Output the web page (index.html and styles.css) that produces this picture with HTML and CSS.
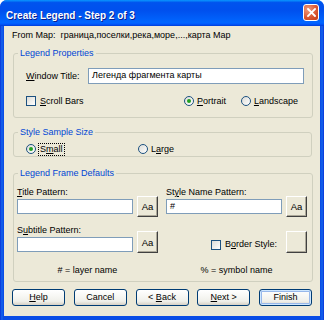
FILE: index.html
```html
<!DOCTYPE html>
<html lang="en">
<head>
    <meta charset="UTF-8">
    <title>Create Legend - Step 2 of 3</title>
    <link rel="stylesheet" href="styles.css">
</head>
<body>
    <div class="window">
        <div class="titlebar">
            <span class="title">Create Legend - Step 2 of 3</span>
            <span class="close">
                <svg width="9" height="9" viewBox="0 0 9 9"><path d="M1 1 L8 8 M8 1 L1 8" stroke="#fff" stroke-width="1.8" stroke-linecap="square"/></svg>
            </span>
        </div>

        <div class="client">
            <div class="from-map">
                <span class="from-label">From Map:</span>
                <span>граница,поселки,река,море,...,карта Map</span>
            </div>

            <fieldset class="group">
                <legend>Legend Properties</legend>
                <div class="group-body props">
                    <div class="row">
                        <span class="field-label"><u>W</u>indow Title:</span>
                        <div class="textbox wide">Легенда фрагмента карты</div>
                    </div>
                    <div class="row options">
                        <span class="opt"><span class="check"></span><span><u>S</u>croll Bars</span></span>
                        <span class="opt portrait"><span class="radio checked"></span><span><u>P</u>ortrait</span></span>
                        <span class="opt"><span class="radio"></span><span><u>L</u>andscape</span></span>
                    </div>
                </div>
            </fieldset>

            <fieldset class="group sample">
                <legend>Style Sample Size</legend>
                <div class="group-body sizes">
                    <span class="opt small"><span class="radio checked"></span><span class="focus">S<u>m</u>all</span></span>
                    <span class="opt"><span class="radio"></span><span>L<u>a</u>rge</span></span>
                </div>
            </fieldset>

            <fieldset class="group frame">
                <legend>Legend Frame Defaults</legend>
                <div class="group-body patterns">
                    <div class="cell first">
                        <div class="field">
                            <span class="field-label"><u>T</u>itle Pattern:</span>
                            <div class="textbox"></div>
                        </div>
                        <span class="btn-classic">Aa</span>
                    </div>
                    <div class="cell first">
                        <div class="field">
                            <span class="field-label">St<u>y</u>le Name Pattern:</span>
                            <div class="textbox">#</div>
                        </div>
                        <span class="btn-classic">Aa</span>
                    </div>
                    <div class="cell second">
                        <div class="field">
                            <span class="field-label">S<u>u</u>btitle Pattern:</span>
                            <div class="textbox"></div>
                        </div>
                        <span class="btn-classic">Aa</span>
                    </div>
                    <div class="cell second">
                        <div class="field border-field">
                            <span class="opt"><span class="check"></span><span>B<u>o</u>rder Style:</span></span>
                        </div>
                        <span class="btn-classic"></span>
                    </div>
                    <div class="hint">#&nbsp;= layer name</div>
                    <div class="hint">%&nbsp;= symbol name</div>
                </div>
            </fieldset>

            <div class="buttons">
                <span class="btn"><span><u>H</u>elp</span></span>
                <span class="btn"><span>Cancel</span></span>
                <span class="btn"><span>&lt;&nbsp;<u>B</u>ack</span></span>
                <span class="btn"><span><u>N</u>ext&nbsp;&gt;</span></span>
                <span class="btn default"><span>Finish</span></span>
            </div>
        </div>
    </div>
</body>
</html>
```

FILE: styles.css
```css
/* Reset */
* {
    margin: 0;
    padding: 0;
    box-sizing: border-box;
}

body {
    background-color: #ffffff;
    font-family: 'Liberation Sans', Arial, sans-serif;
    font-size: 9px;
    line-height: 11px;
    color: #000000;
}

u {
    text-decoration: underline;
    text-underline-offset: 1px;
}

/* Window frame */
.window {
    width: 324px;
    height: 320px;
    display: flex;
    flex-direction: column;
    border-radius: 7px 7px 0 0;
    overflow: hidden;
    background: linear-gradient(90deg, #0831d9 0, #166aee 2px, #0a4de6 3px, #0a4de6 321px, #166aee 322px, #0831d9 324px);
}

.titlebar {
    height: 26px;
    flex: none;
    display: flex;
    align-items: center;
    justify-content: space-between;
    padding: 0 5px 0 6px;
    background: linear-gradient(#0997ff 0%, #0053ee 10%, #0050ee 40%, #0066ff 86%, #005bff 92%, #003dd7 100%);
}

.title {
    color: #ffffff;
    font-weight: bold;
    font-size: 10px;
    padding-top: 4px;
    text-shadow: 1px 1px #0a1d8c;
}

.close {
    width: 16px;
    height: 17px;
    margin-top: -2px;
    display: flex;
    align-items: center;
    justify-content: center;
    border: 1px solid #ffffff;
    border-radius: 3px;
    background: radial-gradient(circle at 30% 30%, #f19b7c, #d8542f 60%, #c13e1a);
}

.client {
    flex: 1;
    margin: 0 4px 4px;
    background-color: #ece9d8;
}

.from-map {
    display: flex;
    gap: 5px;
    margin: 4px 0 0 8px;
    white-space: nowrap;
}

/* Group boxes */
.group {
    margin: 7px 8px 0 9px;
    border: 1px solid #d0d0bf;
    border-radius: 3px;
}

.group legend {
    color: #0046d5;
    margin-left: 4px;
    padding: 0 2px;
}

.sample {
    margin-top: 9px;
}

.frame {
    margin-top: 11px;
}

.props {
    padding: 9px 8px 10px 12px;
}

.row {
    display: flex;
    align-items: center;
}

.props .field-label {
    width: 62px;
}

.textbox {
    height: 15px;
    background-color: #ffffff;
    border: 1px solid #7f9db9;
    padding: 1px 3px;
    line-height: 11px;
}

.wide {
    width: 216px;
    height: 16px;
}

.options {
    margin-top: 11px;
    height: 12px;
    padding-right: 6px;
}

.opt {
    display: flex;
    align-items: center;
}

.portrait {
    margin-left: auto;
    margin-right: 15px;
}

.check {
    width: 10px;
    height: 10px;
    margin-right: 4px;
    border: 1px solid #1c5180;
    background: linear-gradient(135deg, #dcdcd7, #ffffff);
}

.radio {
    width: 10px;
    height: 10px;
    margin-right: 3px;
    border: 1px solid #1c5180;
    border-radius: 50%;
    background: linear-gradient(135deg, #dcdcd7, #ffffff);
    position: relative;
}

.radio.checked::after {
    content: '';
    position: absolute;
    left: 2px;
    top: 2px;
    width: 4px;
    height: 4px;
    border-radius: 50%;
    background-color: #21a121;
}

.sizes {
    display: flex;
    align-items: center;
    padding: 5px 0 1px 12px;
    box-sizing: content-box;
    height: 12px;
}

.small {
    width: 112px;
}

.focus {
    outline: 1px dotted #000000;
    padding: 0 1px;
}

/* Frame defaults */
.patterns {
    display: grid;
    grid-template-columns: 141px 141px;
    column-gap: 8px;
    row-gap: 11px;
    padding: 8px 5px 5px 3px;
}

.cell {
    display: flex;
    align-items: flex-end;
    gap: 4px;
}

.field {
    width: 116px;
    display: flex;
    flex-direction: column;
}

.field .field-label {
    margin-bottom: 1px;
}

.btn-classic {
    width: 21px;
    height: 21px;
    display: flex;
    align-items: center;
    justify-content: center;
    font-size: 9.5px;
    border: 1px solid;
    border-color: #ffffff #404040 #404040 #ffffff;
    box-shadow: inset -1px -1px #aca899;
    background-color: #ece9d8;
    margin-bottom: -3px;
}

.second .btn-classic {
    height: 22px;
    margin-bottom: -1px;
}

.border-field {
    height: 15px;
    flex-direction: row;
    justify-content: flex-end;
    align-items: center;
    padding-right: 5px;
}

.hint {
    text-align: center;
    margin-top: 2px;
}

/* Dialog buttons */
.buttons {
    display: flex;
    gap: 8.75px;
    margin: 7px 0 0 8px;
}

.btn {
    width: 53px;
    height: 17px;
    display: flex;
    align-items: center;
    justify-content: center;
    border: 1px solid #003c74;
    border-radius: 3px;
    background: linear-gradient(#ffffff, #f0f0ea 75%, #d6d0c5);
}

.btn.default {
    box-shadow: inset 0 0 0 1px #cee7ff, inset 0 0 0 2px #98b8ea;
}
```
